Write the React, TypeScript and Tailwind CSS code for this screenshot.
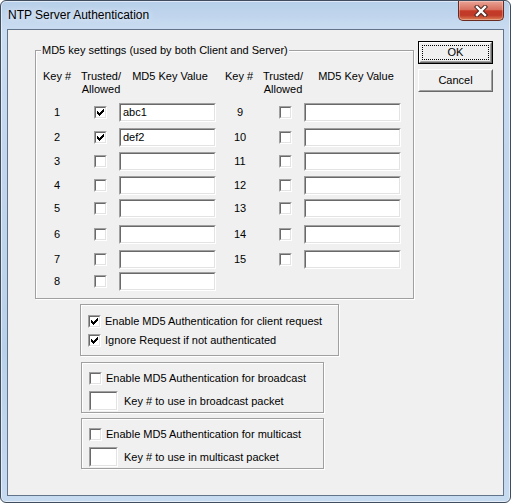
import React from "react";

const SUNKEN_OUT = "border border-t-[#a0a0a0] border-l-[#a0a0a0] border-b-white border-r-white";
const SUNKEN_IN = "border border-t-[#696969] border-l-[#696969] border-b-[#e3e3e3] border-r-[#e3e3e3]";
const ETCHED = "border border-[#a0a0a0] shadow-[inset_1px_1px_0_#ffffff,1px_1px_0_#ffffff]";

// classic 7x7 check mark, one 3px-tall column per x
const CHECK_COLS = [2, 3, 4, 3, 2, 1, 0];

const LEFT_GAPS = ["mt-[7px]", "mt-[6px]", "mt-[5px]", "mt-[5px]", "mt-[4px]", "mt-[7px]", "mt-[6px]", "mt-[3px]"];

type Key = { id: number; trusted: boolean; value: string };

const KEYS: Key[] = Array.from({ length: 15 }, (_, i) => ({
  id: i + 1,
  trusted: i < 2,
  value: i === 0 ? "abc1" : i === 1 ? "def2" : "",
}));

function CheckBox({ checked }: { checked?: boolean }) {
  return (
    <span className={`flex h-[13px] w-[13px] shrink-0 ${SUNKEN_OUT}`}>
      <span className={`flex flex-1 items-center justify-center bg-white ${SUNKEN_IN}`}>
        {checked && (
          <svg width="7" height="7" viewBox="0 0 7 7" shapeRendering="crispEdges">
            {CHECK_COLS.map((y, x) => (
              <rect key={x} x={x} y={y} width="1" height="3" fill="#000" />
            ))}
          </svg>
        )}
      </span>
    </span>
  );
}

function TextBox({ value, className }: { value?: string; className: string }) {
  return (
    <span className={`flex shrink-0 ${SUNKEN_OUT} ${className}`}>
      <span className={`flex flex-1 items-center bg-white pl-[2px] ${SUNKEN_IN}`}>{value}</span>
    </span>
  );
}

function KeyCells({ k, right }: { k?: Key; right?: boolean }) {
  if (!k) return <span className="w-[185px]" />;
  return (
    <>
      <span className={`text-center ${right ? "w-[48px]" : "w-[42px]"}`}>{k.id}</span>
      <span className={right ? "ml-[15px]" : "ml-[16px]"}>
        <CheckBox checked={k.trusted} />
      </span>
      <TextBox value={k.value} className="ml-[12px] h-[19px] w-[97px]" />
    </>
  );
}

function KeyTable() {
  const left = KEYS.slice(0, 8);
  const right = KEYS.slice(8);
  return (
    <div className={`relative w-[379px] pt-[19px] pb-[7px] ${ETCHED}`}>
      <span className="absolute -top-[7px] left-[5px] bg-[#f0f0f0] px-[1px]">
        MD5 key settings (used by both Client and Server)
      </span>
      <div className="flex">
        <span className="w-[42px] text-center">Key #</span>
        <span className="w-[46px] text-center">
          Trusted/
          <br />
          Allowed
        </span>
        <span className="w-[92px] text-center">MD5 Key Value</span>
        <span className="w-[46px] text-center">Key #</span>
        <span className="w-[42px] text-center">
          Trusted/
          <br />
          Allowed
        </span>
        <span className="w-[104px] text-center">MD5 Key Value</span>
      </div>
      {left.map((k, i) => (
        <div key={k.id} className={`flex h-[19px] items-center ${LEFT_GAPS[i]}`}>
          <KeyCells k={k} />
          <KeyCells k={right[i]} right />
        </div>
      ))}
    </div>
  );
}

function CastBox({ kind, className }: { kind: string; className: string }) {
  return (
    <div className={`w-[243px] pt-[9px] pb-[1px] pl-[7px] ${ETCHED} ${className}`}>
      <div className="flex items-center">
        <CheckBox />
        <span className="ml-[4px]">Enable MD5 Authentication for {kind}</span>
      </div>
      <div className="mt-[6px] flex items-center">
        <TextBox className="h-[20px] w-[29px]" />
        <span className="ml-[6px]">Key # to use in {kind} packet</span>
      </div>
    </div>
  );
}

function Button({ label, isDefault }: { label: string; isDefault?: boolean }) {
  return (
    <div className={`h-[23px] w-[75px] ${isDefault ? "border border-[#000]" : ""}`}>
      <div className="flex h-full border border-t-[#ffffff] border-l-[#ffffff] border-b-[#696969] border-r-[#696969]">
        <div className="flex flex-1 border border-t-[#f0f0f0] border-l-[#f0f0f0] border-b-[#a0a0a0] border-r-[#a0a0a0] bg-[#f0f0f0] p-[1px]">
          <div
            className={`flex flex-1 items-center justify-center ${
              isDefault ? "border border-dotted border-[#000]" : ""
            }`}
          >
            {label}
          </div>
        </div>
      </div>
    </div>
  );
}

function CloseButton() {
  return (
    <div className="absolute top-0 right-[6px] flex h-[20px] w-[46px] items-center justify-center rounded-b-[5px] border border-t-0 border-[#6a2a20] bg-[linear-gradient(to_bottom,#e9a496_0%,#d8705f_45%,#c43a27_52%,#c03a28_75%,#dc7f55_100%)] shadow-[inset_0_0_0_1px_rgba(255,255,255,0.3)]">
      <svg width="14" height="12" viewBox="0 0 14 12">
        <path d="M3 2 L11 10 M11 2 L3 10" stroke="#4b2620" strokeWidth="4.4" strokeLinecap="square" />
        <path d="M3 2 L11 10 M11 2 L3 10" stroke="#ffffff" strokeWidth="2.4" strokeLinecap="square" />
      </svg>
    </div>
  );
}

export default function App() {
  return (
    <div className="relative flex h-[503px] w-[511px] flex-col overflow-hidden rounded-[6px] border border-[#3f4d5e] bg-[linear-gradient(to_bottom,#b7cfe9_0%,#cadcf1_6%,#c2d7ee_30%,#bad1eb_70%,#c6daf0_100%)] px-[6px] pb-[6px] font-['Liberation_Sans',Arial,sans-serif] text-[11px] leading-[13px] text-black shadow-[inset_0_0_0_1px_rgba(255,255,255,0.55)]">
      <div className="flex h-[28px] items-center pl-[1px] text-[12px] [text-shadow:0_0_6px_rgba(255,255,255,0.9)]">
        NTP Server Authentication
      </div>
      <CloseButton />
      <div className="flex flex-1 items-start border border-[#62748a] bg-[#f0f0f0]">
        <div className="pt-[20px] pl-[27px]">
          <KeyTable />
          <div className={`mt-[5px] ml-[45px] w-[259px] pt-[10px] pb-[8px] pl-[7px] ${ETCHED}`}>
            <div className="flex items-center">
              <CheckBox checked />
              <span className="ml-[4px]">Enable MD5 Authentication for client request</span>
            </div>
            <div className="mt-[6px] flex items-center">
              <CheckBox checked />
              <span className="ml-[4px]">Ignore Request if not authenticated</span>
            </div>
          </div>
          <CastBox kind="broadcast" className="mt-[6px] ml-[46px]" />
          <CastBox kind="multicast" className="mt-[5px] ml-[46px]" />
        </div>
        <div className="ml-[4px] flex flex-col gap-[5px] pt-[11px]">
          <Button label="OK" isDefault />
          <Button label="Cancel" />
        </div>
      </div>
    </div>
  );
}
